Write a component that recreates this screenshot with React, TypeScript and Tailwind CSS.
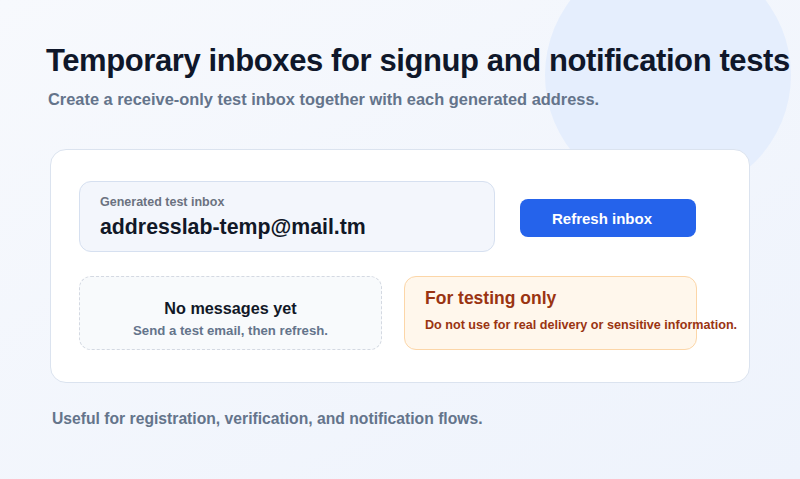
import React from "react";

function App() {
  return (
    <div
      className="relative h-[479px] w-[800px] overflow-hidden bg-gradient-to-br from-[#f7f9fd] to-[#eef3fc]"
      style={{ fontFamily: '"Liberation Sans", Arial, sans-serif' }}
    >
      {/* soft decorative circle top right */}
      <div className="absolute left-[545px] top-[-48px] h-[246px] w-[246px] rounded-full bg-[#e5eefd]" />

      <div className="relative flex flex-col pl-[46px] pt-[41px]">
        <h1 className="text-[31px] font-bold leading-[40px] tracking-[-0.4px] text-[#0f172a]">
          Temporary inboxes for signup and notification tests
        </h1>
        <p className="ml-[2px] mt-[8px] text-[16.4px] font-bold leading-[20px] text-[#64748b]">
          Create a receive-only test inbox together with each generated address.
        </p>

        <div className="ml-[4px] mt-[40px] flex h-[234px] w-[700px] flex-col gap-[24px] rounded-[16px] border border-[#dbe3ef] bg-white pl-[28px] pt-[31px]">
          <div className="flex items-center gap-[25px]">
            <div className="flex h-[71px] w-[416px] flex-col justify-center rounded-[12px] border border-[#d6e0f0] bg-[#f3f6fc] pl-[20px]">
              <span className="text-[12.5px] font-bold leading-[16px] text-[#6b7280]">
                Generated test inbox
              </span>
              <span className="mt-[4px] text-[21.3px] font-bold leading-[26px] text-[#111827]">
                addresslab-temp@mail.tm
              </span>
            </div>
            <button className="mt-[2px] h-[38px] w-[176px] rounded-[8px] bg-[#2563eb] pr-[12px] pt-[3px] text-[15px] font-bold text-white">
              Refresh inbox
            </button>
          </div>

          <div className="flex gap-[22px]">
            <div className="flex h-[74px] w-[303px] flex-col items-center justify-center rounded-[12px] border border-dashed border-[#d4d9e2] bg-[#f8fafc] pt-[10px]">
              <span className="text-[16.2px] font-bold leading-[20px] text-[#111827]">
                No messages yet
              </span>
              <span className="mt-[4px] text-[13.2px] font-bold leading-[17px] text-[#64748b]">
                Send a test email, then refresh.
              </span>
            </div>
            <div className="flex h-[74px] w-[293px] flex-col rounded-[12px] border border-[#fcd6a8] bg-[#fff7ec] pl-[20px] pt-[10px]">
              <span className="text-[17.5px] font-bold leading-[22px] text-[#9a3412]">
                For testing only
              </span>
              <span className="mt-[8px] whitespace-nowrap text-[12.6px] font-bold leading-[16px] text-[#9a3412]">
                Do not use for real delivery or sensitive information.
              </span>
            </div>
          </div>
        </div>

        <p className="ml-[6px] mt-[26px] text-[15.7px] font-bold leading-[20px] text-[#64748b]">
          Useful for registration, verification, and notification flows.
        </p>
      </div>
    </div>
  );
}

export default App;
